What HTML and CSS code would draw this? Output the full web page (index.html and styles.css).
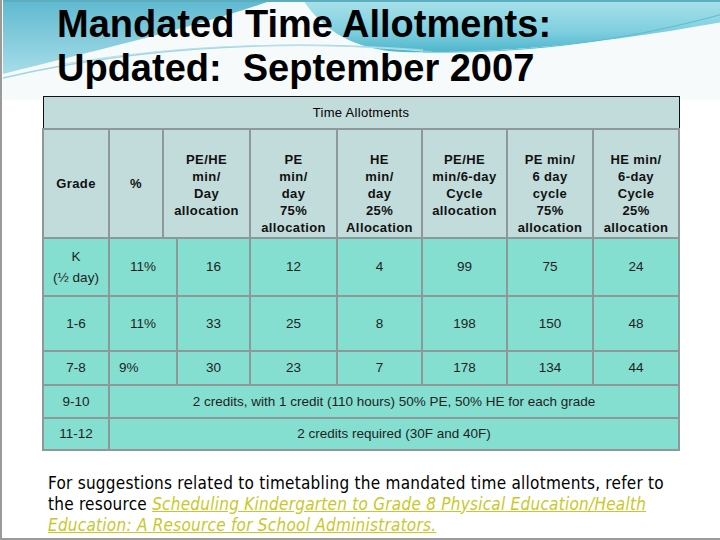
FILE: index.html
```html
<!DOCTYPE html>
<html>
<head>
<meta charset="utf-8">
<link rel="stylesheet" href="styles.css">
</head>
<body>
<div class="slide">
  <svg class="swoosh" width="722" height="100" viewBox="0 0 720 100">
    <defs>
      <linearGradient id="gl" x1="0" y1="0" x2="0" y2="1">
        <stop offset="0" stop-color="#5fb9d0"/>
        <stop offset="1" stop-color="#a6dde8"/>
      </linearGradient>
      <linearGradient id="gr" x1="0" y1="0" x2="0" y2="1">
        <stop offset="0" stop-color="#a9e1ea"/>
        <stop offset="0.6" stop-color="#7fcfdf"/>
        <stop offset="1" stop-color="#4db6cc"/>
      </linearGradient>
    </defs>
    <rect x="0" y="0" width="720" height="100" fill="#f6fafb"/>
    <path d="M0,0 H270 C190,28 95,50 0,74 Z" fill="url(#gl)"/>
    <path d="M300,0 H720 V22 C630,38 520,54 400,52 C350,50 320,30 300,0 Z" fill="url(#gr)"/>
    <path d="M0,78 C120,50 260,38 420,50" stroke="#9fd6e2" stroke-width="1.5" fill="none"/>
    <path d="M60,64 C180,44 300,40 430,52" stroke="#b8e2ea" stroke-width="1" fill="none"/>
    <path d="M420,52 C540,54 640,36 720,14" stroke="#5cbdd0" stroke-width="1" fill="none"/>
    <rect x="0" y="0" width="720" height="2" fill="#5aaebf"/>
  </svg>
  <div class="content">
    <h1 class="title">Mandated Time Allotments:<br>Updated:&nbsp; September 2007</h1>
    <table class="allot">
      <colgroup>
        <col class="c-grade"><col class="c-pct"><col class="c-gap"><col class="c-pehe"><col class="c-pe"><col class="c-he"><col class="c-cyc"><col class="c-pec"><col class="c-hec">
      </colgroup>
      <tr class="r-top"><th colspan="9" class="top">Time Allotments</th></tr>
      <tr class="r-head">
        <th class="mid">Grade</th>
        <th class="mid">%</th>
        <th colspan="2">PE/HE<br>min/<br>Day<br>allocation</th>
        <th>PE<br>min/<br>day<br>75%<br>allocation</th>
        <th>HE<br>min/<br>day<br>25%<br>Allocation</th>
        <th>PE/HE<br>min/6-day<br>Cycle<br>allocation</th>
        <th>PE min/<br>6 day<br>cycle<br>75%<br>allocation</th>
        <th>HE min/<br>6-day<br>Cycle<br>25%<br>allocation</th>
      </tr>
      <tr class="r1">
        <td class="kcell">K<br>(½ day)</td><td colspan="2">11%</td><td>16</td><td>12</td><td>4</td><td>99</td><td>75</td><td>24</td>
      </tr>
      <tr class="r2">
        <td>1-6</td><td colspan="2">11%</td><td>33</td><td>25</td><td>8</td><td>198</td><td>150</td><td>48</td>
      </tr>
      <tr class="r3">
        <td>7-8</td><td colspan="2" class="left">9%</td><td>30</td><td>23</td><td>7</td><td>178</td><td>134</td><td>44</td>
      </tr>
      <tr class="r4">
        <td>9-10</td><td colspan="8">2 credits, with 1 credit (110 hours) 50% PE, 50% HE for each grade</td>
      </tr>
      <tr class="r5">
        <td>11-12</td><td colspan="8">2 credits required (30F and 40F)</td>
      </tr>
    </table>
    <p class="note">For suggestions related to timetabling the mandated time allotments, refer to the resource <a class="ref">Scheduling Kindergarten to Grade 8 Physical Education/Health Education: A Resource for School Administrators.</a></p>
  </div>
</div>
</body>
</html>
```
FILE: styles.css
```css
html, body {
  margin: 0;
  padding: 0;
  background: #ffffff;
}
.slide {
  position: relative;
  width: 720px;
  height: 540px;
  overflow: hidden;
  background: #ffffff;
  box-sizing: border-box;
  border-left: 2px solid #9a9a9a;
  border-bottom: 2px solid #9a9a9a;
}
.swoosh {
  position: absolute;
  top: 0;
  left: 0;
  z-index: 0;
}
.content {
  position: relative;
  z-index: 1;
}
.title {
  margin: 0;
  padding: 2px 0 0 55px;
  font-family: "Liberation Sans", Arial, sans-serif;
  font-weight: bold;
  font-size: 38px;
  line-height: 44px;
  color: #000;
  height: 94px;
}
.allot {
  margin-left: 40px;
  width: 636px;
  border-collapse: collapse;
  table-layout: fixed;
  font-family: "Liberation Sans", Arial, sans-serif;
  color: #1e1e1e;
}
.c-grade { width: 66px; }
.c-pct { width: 54px; }
.c-gap { width: 14px; }
.c-pehe { width: 73px; }
.c-pe { width: 87px; }
.c-he { width: 85px; }
.c-cyc { width: 85px; }
.c-pec { width: 86px; }
.c-hec { width: 86px; }
.allot th, .allot td {
  border: 2px solid #8f9898;
  text-align: center;
  padding: 0;
}
.allot th {
  background: #c2dbdb;
  font-size: 13px;
  line-height: 17px;
  font-weight: bold;
  letter-spacing: 0.4px;
  vertical-align: top;
  padding-top: 21px;
  color: #111;
}
.allot th.top {
  border: 1px solid #111;
  border-bottom: 2px solid #8f9898;
  font-weight: normal;
  vertical-align: middle;
  padding-top: 0;
  letter-spacing: 0.3px;
  color: #000;
}
.allot th.mid {
  vertical-align: middle;
  padding-top: 0;
}
.r-top { height: 32px; }
.r-head { height: 109px; }
.allot td {
  background: #84dfd0;
  font-size: 13.5px;
  line-height: 21px;
  vertical-align: middle;
}
.allot td.kcell { line-height: 21px; }
.allot td.left { text-align: left; padding-left: 9px; }
.r1 { height: 58px; }
.r2 { height: 55px; }
.r3 { height: 34px; }
.r4 { height: 33px; }
.r5 { height: 32px; }
.note {
  margin: 22px 0 0 46px;
  width: 640px;
  font-family: "DejaVu Sans Condensed", "DejaVu Sans", sans-serif;
  font-size: 17px;
  letter-spacing: 0.25px;
  line-height: 21px;
  color: #000;
}
.ref {
  color: #c8c828;
  font-style: italic;
  text-decoration: underline;
}
```
